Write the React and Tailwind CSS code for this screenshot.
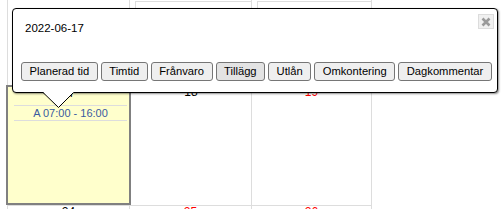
import React from "react";

function Btn({ children, active }) {
  return (
    <button
      className={`h-[19px] px-[7.5px] py-0 border border-[#767676] rounded-[3px] text-[11.2px] leading-[15px] text-black whitespace-nowrap ${
        active ? "bg-[#e3e3e3]" : "bg-[#efefef]"
      }`}
    >
      {children}
    </button>
  );
}

export default function App() {
  return (
    <div className="relative w-[503px] h-[209px] overflow-hidden bg-white font-['Liberation_Sans',Arial,sans-serif]">
      {/* Row 1 (previous week, mostly hidden) */}
      <div className="flex h-[85px]">
        <div className="ml-[7px] w-[123px] border-x border-[#dddddd]" />
        <div className="w-[122px] pl-[5px] border-r border-[#dddddd]">
          <div className="h-full mt-[1px] border-t border-l border-[#dddddd]" />
        </div>
        <div className="w-[120px] pl-[5px] border-r border-[#dddddd]">
          <div className="h-full mt-[1px] border-t border-l border-[#dddddd]" />
        </div>
      </div>

      {/* Row 2 */}
      <div className="flex h-[120px]">
        <div className="ml-[6px] w-[125px] border-2 border-[#808080] bg-[#ffffcc] flex flex-col items-center">
          <div className="text-[12px] leading-[12px] text-black">17</div>
          <div className="mt-[6px] ml-[6px] mr-[2px] self-stretch border-y border-[#dddddd] text-center text-[11px] leading-[14px] text-[#3a5ba0]">
            A 07:00 - 16:00
          </div>
        </div>
        <div className="w-[121px] border-t border-r border-[#dddddd] flex flex-col items-center">
          <div className="text-[12px] leading-[12px] text-black">18</div>
        </div>
        <div className="w-[120px] border-t border-r border-[#dddddd] flex flex-col items-center">
          <div className="text-[12px] leading-[12px] text-[#ff0000]">19</div>
        </div>
      </div>

      {/* Row 3 */}
      <div className="flex h-[20px]">
        <div className="ml-[7px] w-[123px] border-x border-t border-[#dddddd] flex flex-col items-center">
          <div className="text-[12px] leading-[12px] text-black">24</div>
        </div>
        <div className="w-[122px] border-t border-r border-[#dddddd] flex flex-col items-center">
          <div className="text-[12px] leading-[12px] text-[#ff0000]">25</div>
        </div>
        <div className="w-[120px] border-t border-r border-[#dddddd] flex flex-col items-center">
          <div className="text-[12px] leading-[12px] text-[#ff0000]">26</div>
        </div>
      </div>

      {/* Popup */}
      <div className="absolute left-[12px] top-[8px] w-[486px] h-[85px] bg-white border border-black rounded-[4px] shadow-[1px_1px_2px_rgba(0,0,0,0.45)]">
        <div className="pl-[12px] pt-[11px] text-[11.5px] leading-[16px] text-black">2022-06-17</div>
        <div className="mt-[26px] pl-[8px] flex gap-[3px]">
          <Btn>Planerad tid</Btn>
          <Btn>Timtid</Btn>
          <Btn>Frånvaro</Btn>
          <Btn active>Tillägg</Btn>
          <Btn>Utlån</Btn>
          <Btn>Omkontering</Btn>
          <Btn>Dagkommentar</Btn>
        </div>
        <div className="absolute right-[3px] top-[5px] w-[16px] h-[15px] bg-[#f0f0f0] border border-[#dcdcdc] flex items-center justify-center">
          <svg width="10" height="10" viewBox="0 0 10 10">
            <path d="M1.5 1.5 L8.5 8.5 M8.5 1.5 L1.5 8.5" stroke="#9a9a9a" strokeWidth="2.6" strokeLinecap="butt" />
          </svg>
        </div>
      </div>

      {/* Arrow */}
      <svg className="absolute left-[43px] top-[92px]" width="31" height="17" viewBox="0 0 31 17">
        <polygon points="0,0 31,0 15.5,15.5" fill="white" />
        <polyline points="0,0.5 15.5,15.5 30.5,0.5" fill="none" stroke="black" strokeWidth="1" />
      </svg>
    </div>
  );
}
